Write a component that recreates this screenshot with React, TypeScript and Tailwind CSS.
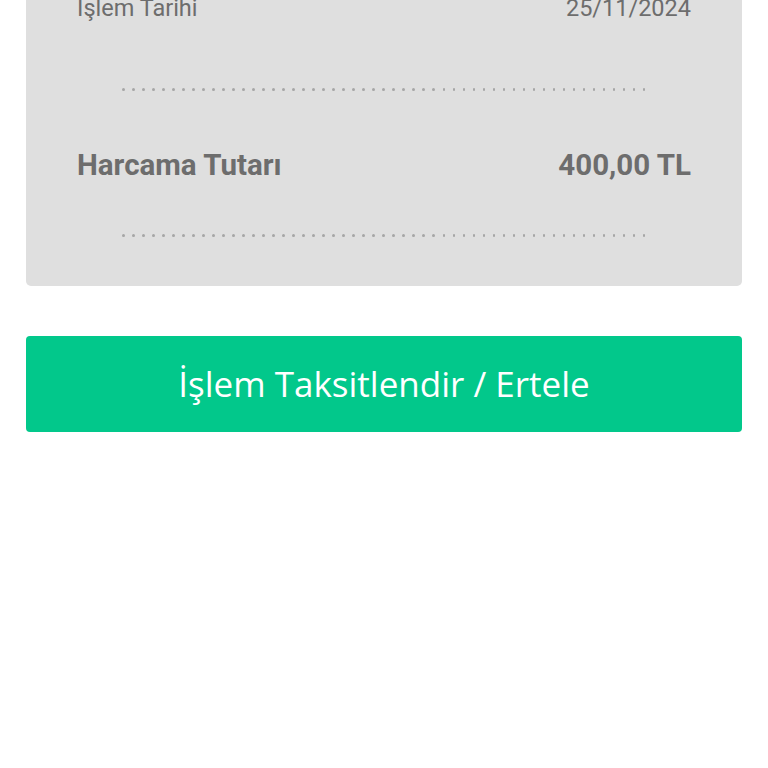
import React from "react";

function Dots() {
  return (
    <div className="mx-[45px] flex h-[3px] items-center justify-between">
      {Array.from({ length: 53 }).map((_, i) => (
        <span key={i} className="block h-[2.5px] w-[2.5px] rounded-full bg-[#a6a6a6]" />
      ))}
    </div>
  );
}

export default function App() {
  return (
    <div className="h-[768px] overflow-hidden bg-white px-[26px]">
      {/* summary card, scrolled so its top is out of view */}
      <div className="-mt-[30px] rounded-b-[5px] bg-[#dfdfdf] px-[51px] pt-[25px] pb-[49px] font-['Roboto',sans-serif] text-[#6d6d6d]">
        <div className="flex items-center justify-between text-[23.5px] leading-[26px]">
          <span>İşlem Tarihi</span>
          <span>25/11/2024</span>
        </div>
        <div className="mt-[67px]">
          <Dots />
        </div>
        <div className="mt-[57px] flex items-center justify-between text-[29.5px] leading-[34px] font-bold">
          <span>Harcama Tutarı</span>
          <span>400,00 TL</span>
        </div>
        <div className="mt-[52px]">
          <Dots />
        </div>
      </div>

      <button className="mt-[50px] flex h-[96px] w-full items-center justify-center rounded-[4px] bg-[#02c88b] font-['Open_Sans',sans-serif] text-[35px] text-white">
        İşlem Taksitlendir / Ertele
      </button>
    </div>
  );
}
